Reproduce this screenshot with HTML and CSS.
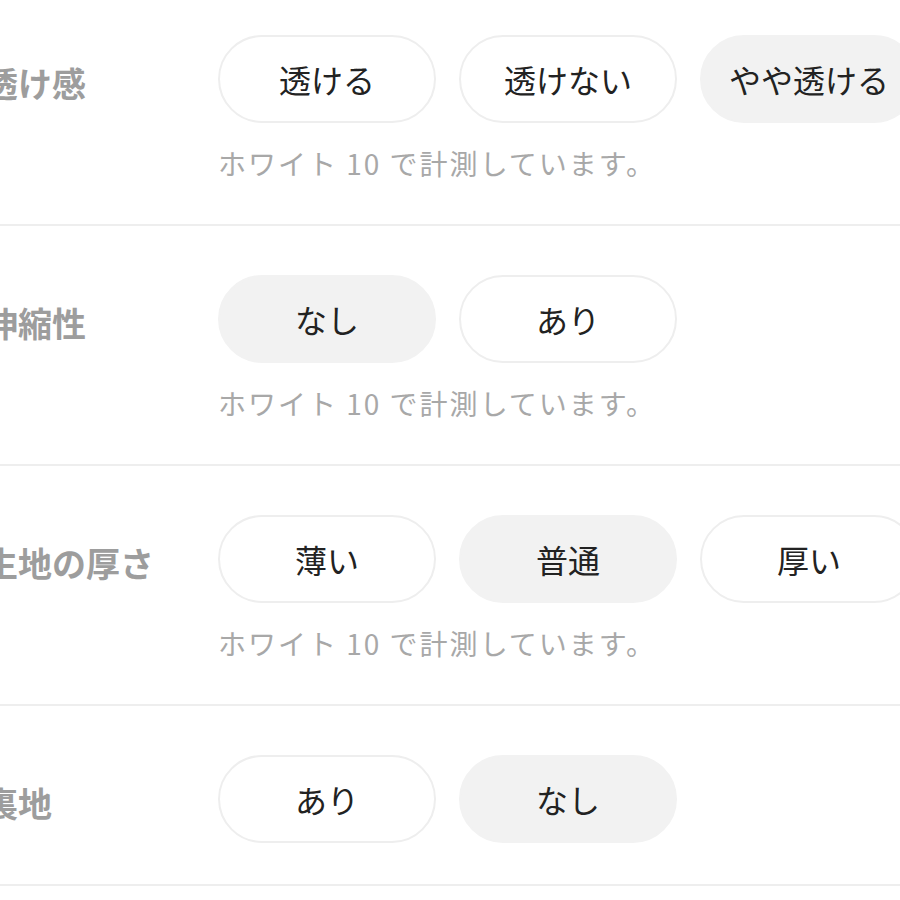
FILE: index.html
```html
<!DOCTYPE html>
<html lang="ja">
<head>
<meta charset="utf-8">
<title>素材の特徴</title>
<link rel="stylesheet" href="styles.css">
</head>
<body>
<div class="spec">
  <div class="row">
    <div class="label">透け感</div>
    <div class="body">
      <div class="options">
        <span class="opt">透ける</span>
        <span class="opt">透けない</span>
        <span class="opt is-on">やや透ける</span>
      </div>
      <p class="note">ホワイト 10 で計測しています。</p>
    </div>
  </div>
  <div class="row">
    <div class="label">伸縮性</div>
    <div class="body">
      <div class="options">
        <span class="opt is-on">なし</span>
        <span class="opt">あり</span>
      </div>
      <p class="note">ホワイト 10 で計測しています。</p>
    </div>
  </div>
  <div class="row">
    <div class="label">生地の厚さ</div>
    <div class="body">
      <div class="options">
        <span class="opt">薄い</span>
        <span class="opt is-on">普通</span>
        <span class="opt">厚い</span>
      </div>
      <p class="note">ホワイト 10 で計測しています。</p>
    </div>
  </div>
  <div class="row">
    <div class="label">裏地</div>
    <div class="body">
      <div class="options">
        <span class="opt">あり</span>
        <span class="opt is-on">なし</span>
      </div>
    </div>
  </div>
</div>
</body>
</html>
```

FILE: styles.css
```css
html, body {
  margin: 0;
  padding: 0;
  background: #ffffff;
  overflow: hidden;
}

body {
  font-family: "Noto Sans CJK JP", "Noto Sans", sans-serif;
  color: #222222;
}

.spec {
  margin-top: -14px;
  margin-left: -16px;
  width: 960px;
}

.row {
  display: grid;
  grid-template-columns: 234px 1fr;
  padding: 49px 0 41px;
  border-bottom: 2px solid #eeeeee;
}

.label {
  height: 88px;
  display: flex;
  align-items: center;
  font-size: 34px;
  font-weight: 700;
  color: #9d9d9d;
  white-space: nowrap;
  padding-top: 6px;
  box-sizing: border-box;
}

.body {
  display: flex;
  flex-direction: column;
}

.options {
  display: flex;
  gap: 23px;
  flex-wrap: nowrap;
}

.opt {
  flex: 0 0 auto;
  width: 218px;
  height: 88px;
  box-sizing: border-box;
  border: 2px solid #eeeeee;
  border-radius: 44px;
  display: flex;
  align-items: center;
  justify-content: center;
  font-size: 32px;
  color: #222222;
  background: #ffffff;
  white-space: nowrap;
}

.opt.is-on {
  background: #f2f2f2;
  border-color: #f2f2f2;
}

.note {
  margin: 20px 0 0;
  font-size: 28px;
  letter-spacing: 2px;
  line-height: 40px;
  color: #a8a8a8;
  white-space: nowrap;
}
```
